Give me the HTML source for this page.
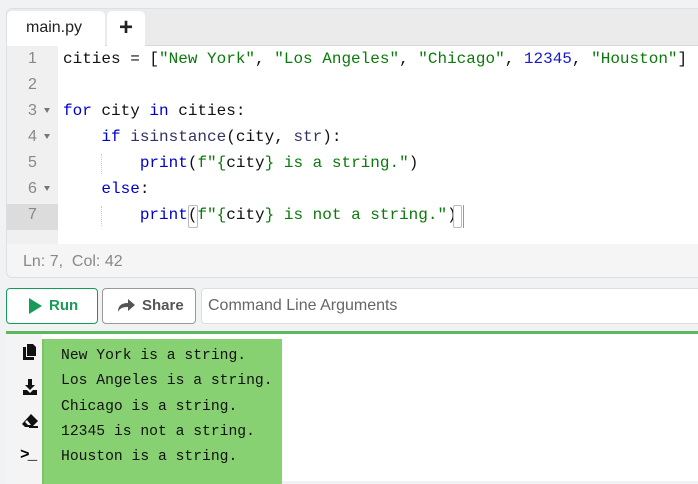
<!DOCTYPE html>
<html><head><style>
*{margin:0;padding:0;box-sizing:border-box}
body{width:698px;height:476px;background:#f0f2f4;font-family:"Liberation Sans",sans-serif;position:relative;overflow:hidden}
.ed{position:absolute;left:6px;top:8px;width:700px;height:270px;background:#f5f5f5;border:1px solid #dde0e3;border-radius:6px;overflow:hidden}
.tabs{position:absolute;left:0;top:0;right:0;height:37px;background:#ebebeb;border-bottom:1px solid #d8d8d8}
.tab{position:absolute;top:2px;height:35px;background:#fff;border-radius:5px 5px 0 0;font-size:16px;color:#222;line-height:33px}
.gut{position:absolute;left:0;top:37px;width:51px;height:198px;background:#f0f0f0}
.code{position:absolute;left:51px;top:37px;right:0;height:198px;background:#fff}
.ln{position:absolute;left:0;width:51px;height:26px;font:16px "Liberation Sans",sans-serif;color:#888;line-height:26px}
.ln span{position:absolute;left:21px}
.ln i{position:absolute;left:37px;top:10px;border-left:3.5px solid transparent;border-right:3.5px solid transparent;border-top:5px solid #777}
.cl{position:absolute;left:5px;height:26px;font:16px "Liberation Mono",monospace;line-height:26px;color:#111;white-space:pre}
.k{color:#0000cc}.s{color:#0a7a0a}.n{color:#1a1acc}.b{color:#336}
.st{position:absolute;left:16px;top:244px;font-size:16px;color:#888}
.btn{position:absolute;top:288px;height:36px;background:#fff;border-radius:4px;font-weight:bold;font-size:15px;line-height:34px}
.out{position:absolute;left:6px;top:331px;width:700px;height:150px;background:#fff;border-top:3px solid #5cb85c}
.side{position:absolute;left:0;top:0;width:36px;height:150px;background:#f4f4f4}
.box{position:absolute;left:36px;top:5px;width:240px;height:145px;background:#88d172;border-left:2px solid #7cc466}
.ol{position:absolute;left:17px;font:14.7px "Liberation Mono",monospace;color:#111;white-space:pre}
</style></head><body>
<div class="ed">
 <div class="tabs">
  <div class="tab" style="left:0;width:98px;padding-left:19px">main.py</div>
  <div class="tab" style="left:100px;width:38px;text-align:center;font-size:24px;font-weight:bold;line-height:33px">+</div>
 </div>
 <div class="gut"></div>
 <div style="position:absolute;left:0;top:195px;width:51px;height:26px;background:#dcdcdc"></div>
 <div class="code"></div>
 <div class="ln" style="top:37px"><span>1</span></div>
 <div class="ln" style="top:63px"><span>2</span></div>
 <div class="ln" style="top:89px"><span>3</span><i></i></div>
 <div class="ln" style="top:115px"><span>4</span><i></i></div>
 <div class="ln" style="top:141px"><span>5</span></div>
 <div class="ln" style="top:167px"><span>6</span><i></i></div>
 <div class="ln" style="top:193px"><span>7</span></div>
 <div style="position:absolute;left:94px;top:145px;height:20px;border-left:1px dotted #ccc"></div>
 <div style="position:absolute;left:94px;top:197px;height:20px;border-left:1px dotted #ccc"></div>
 <div class="cl" style="top:37px;left:56px">cities = [<span class="s">"New York"</span>, <span class="s">"Los Angeles"</span>, <span class="s">"Chicago"</span>, <span class="n">12345</span>, <span class="s">"Houston"</span>]</div>
 <div class="cl" style="top:89px;left:56px"><span class="k">for</span> city <span class="k">in</span> cities:</div>
 <div class="cl" style="top:115px;left:56px">    <span class="k">if</span> <span class="b">isinstance</span>(city, <span class="b">str</span>):</div>
 <div class="cl" style="top:141px;left:56px">        <span class="k">print</span>(<span class="s">f"{</span>city<span class="s">} is a string."</span>)</div>
 <div class="cl" style="top:167px;left:56px">    <span class="k">else</span>:</div>
 <div class="cl" style="top:193px;left:56px">        <span class="k">print</span>(<span class="s">f"{</span>city<span class="s">} is not a string."</span>)</div>
 <div style="position:absolute;left:181px;top:196px;width:10px;height:23px;border:1px solid #bbb;border-radius:2px"></div>
 <div style="position:absolute;left:446px;top:196px;width:9px;height:23px;border:1px solid #bbb;border-radius:2px"></div>
 <div style="position:absolute;left:456px;top:196px;height:23px;border-left:1px solid #999"></div>
 <div class="st">Ln: 7,&nbsp; Col: 42</div>
</div>
<div class="btn" style="left:6px;width:92px;border:1px solid #1a9a5a;color:#1a9a5a;padding-left:42px">Run
 <svg style="position:absolute;left:21px;top:9px" width="14" height="16" viewBox="0 0 14 16"><path d="M1 0L14 8L1 16Z" fill="#1a9a5a"/></svg></div>
<div class="btn" style="left:102px;width:94px;border:1px solid #999;color:#555;padding-left:39px">Share
 <svg style="position:absolute;left:15px;top:10px" width="17" height="14" viewBox="0 0 17 14"><path d="M10 0L17 6L10 12V8C5 8 2 9 0 13C0 7 3 4 10 4Z" fill="#555"/></svg></div>
<div style="position:absolute;left:201px;top:288px;width:500px;height:36px;background:#fff;border:1px solid #ddd;border-radius:4px;font-size:16px;color:#666;line-height:34px;padding-left:6px">Command Line Arguments</div>
<div class="out">
 <div class="side">
  <svg style="position:absolute;left:17px;top:10px" width="14" height="16" viewBox="0 0 14 16"><path d="M0 3H3V13H11V16H0Z" fill="#111"/><path d="M4 0H10L13 3V12H4Z" fill="#111"/></svg>
  <svg style="position:absolute;left:17px;top:45px" width="14" height="16" viewBox="0 0 14 16"><path d="M5 0H9V6H12L7 11L2 6H5Z" fill="#111"/><path d="M0 11H4L7 14L10 11H14V16H0Z" fill="#111"/></svg>
  <svg style="position:absolute;left:16px;top:80px" width="16" height="14" viewBox="0 0 16 14"><path d="M9 0L16 7L10 13H3L0 10Z" fill="#111"/><path d="M3 8L6 11H9L5 6Z" fill="#f4f4f4"/><rect x="7" y="12" width="9" height="2" fill="#111"/></svg>
  <div style="position:absolute;left:14px;top:112px;font:bold 16px 'Liberation Mono',monospace;letter-spacing:-2px">&gt;_</div>
 </div>
 <div class="box">
  <div class="ol" style="top:9px">New York is a string.</div>
  <div class="ol" style="top:34px">Los Angeles is a string.</div>
  <div class="ol" style="top:60px">Chicago is a string.</div>
  <div class="ol" style="top:85px">12345 is not a string.</div>
  <div class="ol" style="top:110px">Houston is a string.</div>
 </div>
</div>
</body></html>
